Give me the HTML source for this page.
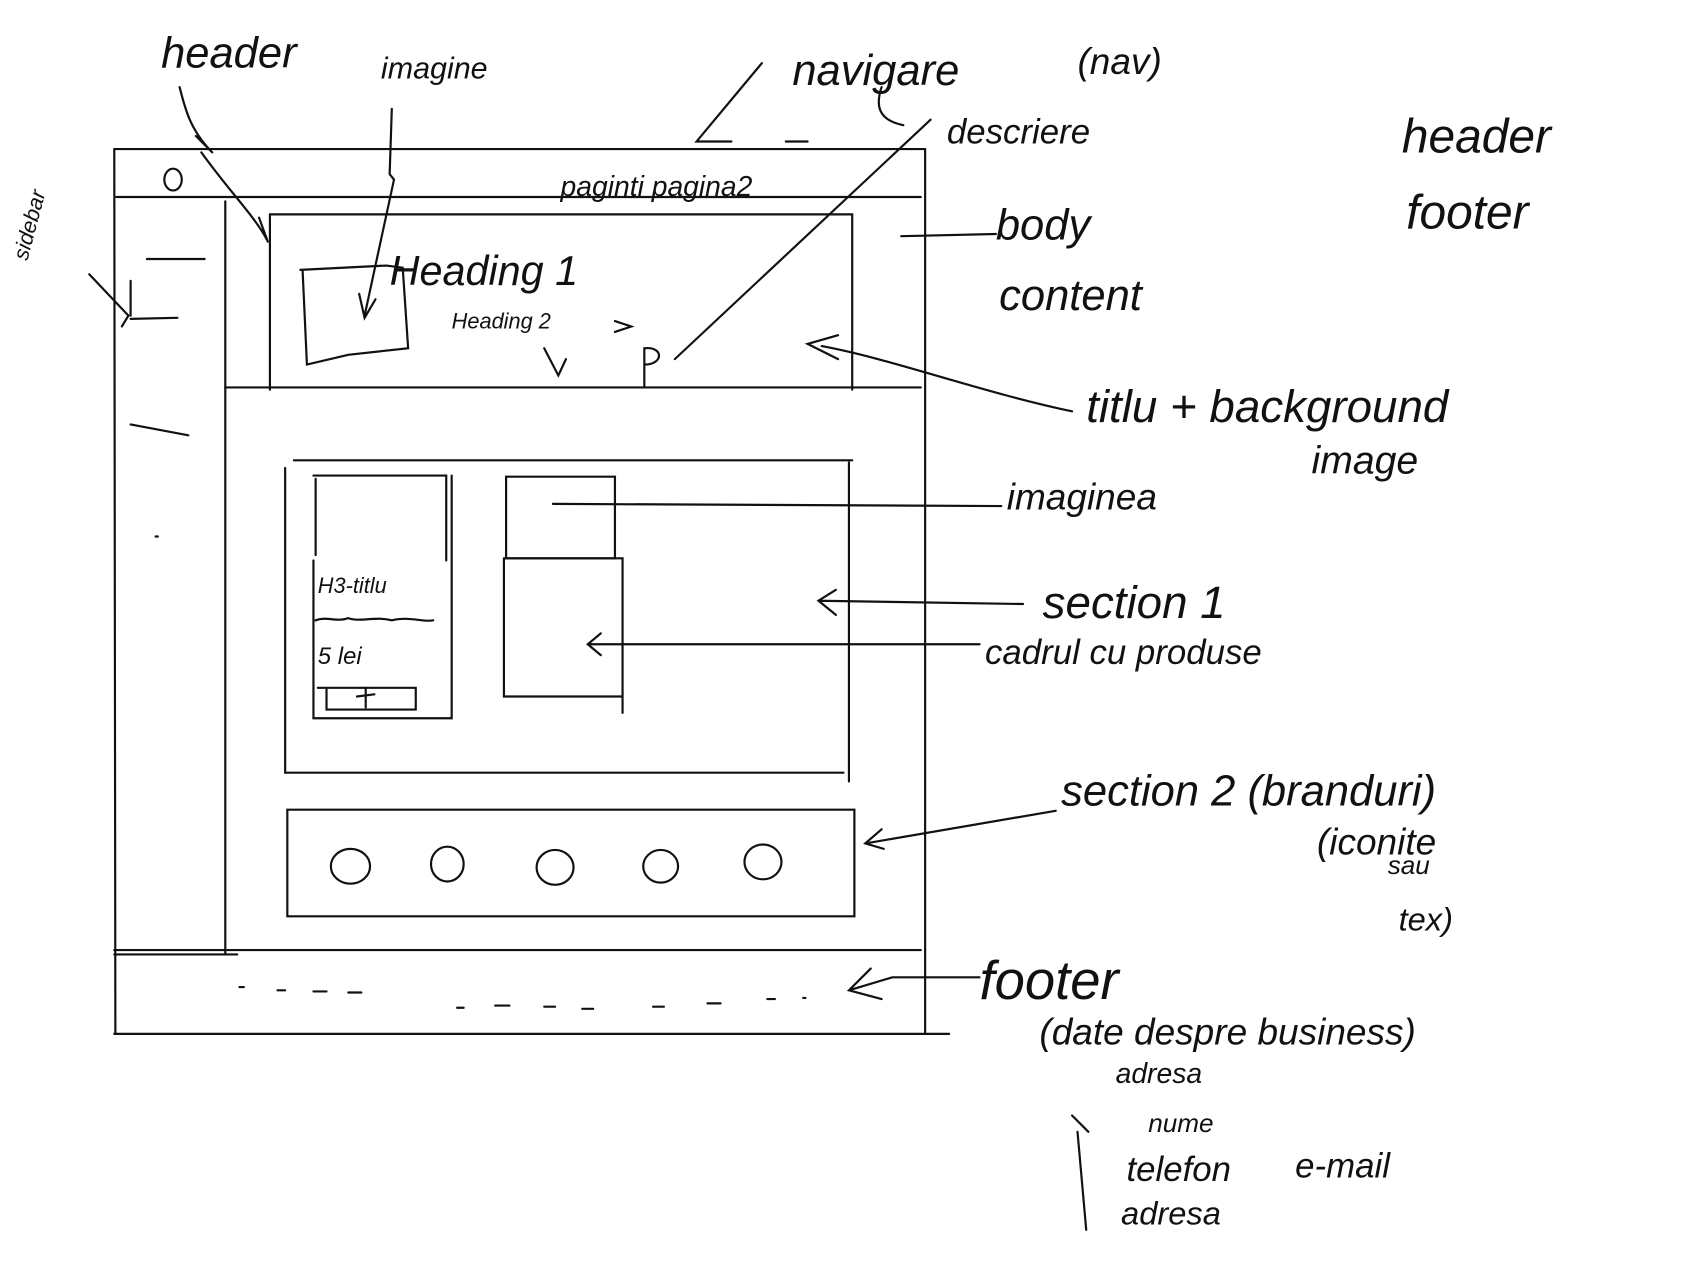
<!DOCTYPE html>
<html><head><meta charset="utf-8"><style>
html,body{margin:0;padding:0;background:#fff;width:1687px;height:1282px;overflow:hidden}
svg{display:block}
text{font-family:"Liberation Sans",sans-serif;font-style:italic;fill:#111;font-weight:normal}
</style></head><body>
<svg width="1687" height="1282" viewBox="0 0 1550 1178" preserveAspectRatio="none" xmlns="http://www.w3.org/2000/svg">
<g stroke="#111" stroke-width="2" fill="none" stroke-linecap="round">
<!-- outer frame -->
<path d="M105 137 L850 137"/>
<path d="M107 181 L846 181"/>
<path d="M105 873 L846 873"/>
<path d="M105 950 L872 950"/>
<path d="M850 137 L850 950"/>
<path d="M105 137 L106 950"/>
<path d="M207 185 L207 877"/>
<path d="M105 877 L218 877"/>
<!-- hero -->
<path d="M248 197 L783 197 L783 358"/>
<path d="M248 197 L248 358"/>
<path d="M207 356 L846 356"/>
<path d="M276 248 L355 244 L370 246 L375 320 L320 326 L282 335 L278 248"/>
<!-- section 1 -->
<path d="M270 423 L783 423"/>
<path d="M262 430 L262 710 L775 710"/>
<path d="M780 425 L780 718"/>
<path d="M288 437 L410 437 L410 515"/>
<path d="M290 440 L290 510"/>
<path d="M288 515 L288 660 L415 660 L415 437"/>
<path d="M292 632 L382 632 L382 652 L300 652 L300 632"/>
<path d="M336 632 L336 650 M328 640 L344 638"/>
<path d="M290 570 C300 566 310 572 320 568 C330 572 345 566 360 570 C375 566 390 572 398 570"/>
<path d="M465 438 L565 438 L565 513 L465 513 Z"/>
<path d="M463 513 L572 513 L572 655 M463 513 L463 640 L572 640"/>
<!-- section 2 -->
<path d="M264 744 L785 744 L785 842 L264 842 Z"/>
<ellipse cx="322" cy="796" rx="18" ry="16"/>
<ellipse cx="411" cy="794" rx="15" ry="16"/>
<ellipse cx="510" cy="797" rx="17" ry="16"/>
<ellipse cx="607" cy="796" rx="16" ry="15"/>
<ellipse cx="701" cy="792" rx="17" ry="16"/>
<!-- footer dashes -->
<path d="M220 907 L224 907 M255 910 L262 910 M288 911 L300 911 M320 912 L332 912 M420 926 L426 926 M455 924 L468 924 M500 925 L510 925 M535 927 L545 927 M600 925 L610 925 M650 922 L662 922 M705 918 L712 918 M738 917 L740 917"/>
<!-- sidebar dashes -->
<path d="M135 238 L188 238 M120 293 L163 292 M120 390 L173 400 M143 493 L145 493"/>
<path d="M82 252 L118 290 L112 300 M120 258 L120 290"/>
<!-- header circle -->
<ellipse cx="159" cy="165" rx="8" ry="10"/>
<!-- arrows & leaders -->
<path d="M165 80 C170 100 175 120 195 140 M180 125 L195 140"/>
<path d="M185 140 C210 175 235 200 245 220 M238 200 L246 222"/>
<path d="M360 100 L358 160 L362 165 L335 290 M330 270 L335 292 L345 275"/>
<path d="M700 58 L640 130 L672 130"/>
<path d="M722 130 L742 130"/>
<path d="M810 80 C805 95 805 110 830 115"/>
<path d="M855 110 L620 330"/>
<path d="M828 217 L915 215"/>
<path d="M985 378 C900 360 820 330 755 318 M770 308 L742 316 L770 330"/>
<path d="M508 463 L920 465"/>
<path d="M752 552 L940 555 M768 542 L752 552 L768 565"/>
<path d="M540 592 L900 592 M552 582 L540 592 L552 602"/>
<path d="M970 745 L795 775 M810 762 L795 775 L812 780"/>
<path d="M780 910 L820 898 L900 898 M800 890 L780 910 L810 918"/>
<path d="M985 1025 L1000 1040 M990 1040 L998 1130"/>
<path d="M500 320 L513 345 L520 330"/>
<path d="M592 355 L592 320 C610 318 610 335 592 335"/>
<path d="M565 295 L580 300 L565 305"/>
</g>
<text x="148" y="62" font-size="40">header</text>
<text x="350" y="72" font-size="28">imagine</text>
<text x="728" y="78" font-size="40">navigare</text>
<text x="990" y="68" font-size="34">(nav)</text>
<text x="870" y="132" font-size="32">descriere</text>
<text x="1288" y="140" font-size="44">header</text>
<text x="1292" y="210" font-size="44">footer</text>
<text x="0" y="0" font-size="20" transform="translate(25,240) rotate(-75)">sidebar</text>
<text x="515" y="180" font-size="26">paginti pagina2</text>
<text x="358" y="262" font-size="38">Heading 1</text>
<text x="415" y="302" font-size="20">Heading 2</text>
<text x="915" y="220" font-size="40">body</text>
<text x="918" y="285" font-size="40">content</text>
<text x="998" y="388" font-size="42">titlu + background</text>
<text x="1205" y="435" font-size="36">image</text>
<text x="925" y="468" font-size="34">imaginea</text>
<text x="958" y="568" font-size="42">section 1</text>
<text x="905" y="610" font-size="32">cadrul cu produse</text>
<text x="975" y="740" font-size="40">section 2 (branduri)</text>
<text x="1210" y="785" font-size="34">(iconite</text>
<text x="1275" y="803" font-size="24">sau</text>
<text x="1285" y="855" font-size="30">tex)</text>
<text x="900" y="918" font-size="50">footer</text>
<text x="955" y="960" font-size="34">(date despre business)</text>
<text x="1025" y="995" font-size="26">adresa</text>
<text x="1055" y="1040" font-size="24">nume</text>
<text x="1035" y="1085" font-size="32">telefon</text>
<text x="1190" y="1082" font-size="32">e-mail</text>
<text x="1030" y="1125" font-size="30">adresa</text>
<text x="292" y="545" font-size="20">H3-titlu</text>
<text x="292" y="610" font-size="22">5 lei</text>
</svg>
</body></html>
